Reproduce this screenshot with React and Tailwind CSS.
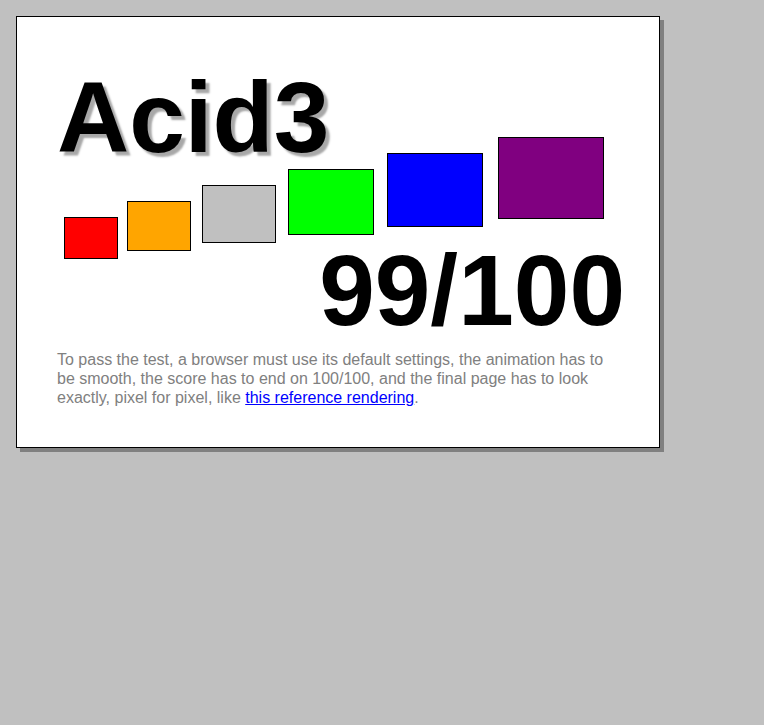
const BUCKETS = [
  { color: "bg-[#ff0000]", w: "w-[54px]", h: "h-[42px]", mt: "mt-[80px]", ml: "ml-[7px]" },
  { color: "bg-[#ffa500]", w: "w-[64px]", h: "h-[50px]", mt: "mt-[64px]", ml: "ml-[9px]" },
  { color: "bg-[#c0c0c0]", w: "w-[74px]", h: "h-[58px]", mt: "mt-[48px]", ml: "ml-[11px]" },
  { color: "bg-[#00ff00]", w: "w-[86px]", h: "h-[66px]", mt: "mt-[32px]", ml: "ml-[12px]" },
  { color: "bg-[#0000ff]", w: "w-[96px]", h: "h-[74px]", mt: "mt-[16px]", ml: "ml-[13px]" },
  { color: "bg-[#800080]", w: "w-[106px]", h: "h-[82px]", mt: "mt-0", ml: "ml-[15px]" },
];

export default function App() {
  return (
    <div className="min-h-screen w-full bg-[#c0c0c0] pt-4 pl-4 font-['Liberation_Sans',Arial,sans-serif]">
      <div className="w-[644px] h-[432px] bg-white border border-black shadow-[4px_4px_0_#808080] pt-[50px] px-[40px]">
        <h1 className="text-[100px] leading-none font-bold text-black [text-shadow:4px_4px_2px_#a8a8a8]">
          Acid3
        </h1>
        <div className="flex items-start -mt-[30px] h-[122px]">
          {BUCKETS.map((b, i) => (
            <div
              key={i}
              className={`${b.color} ${b.w} ${b.h} ${b.mt} ${b.ml} shrink-0 border border-black`}
            />
          ))}
        </div>
        <div className="-mt-[19px] -mr-[6px] text-right text-[100px] leading-none font-bold text-black">
          99/100
        </div>
        <p className="mt-[10px] text-[16px] leading-[19px] text-[#808080]">
          To pass the test, a browser must use its default settings, the animation has to be
          smooth, the score has to end on 100/100, and the final page has to look exactly, pixel
          for pixel, like{" "}
          <a href="#" className="text-[#0000ff] underline">
            this reference rendering
          </a>
          .
        </p>
      </div>
    </div>
  );
}
